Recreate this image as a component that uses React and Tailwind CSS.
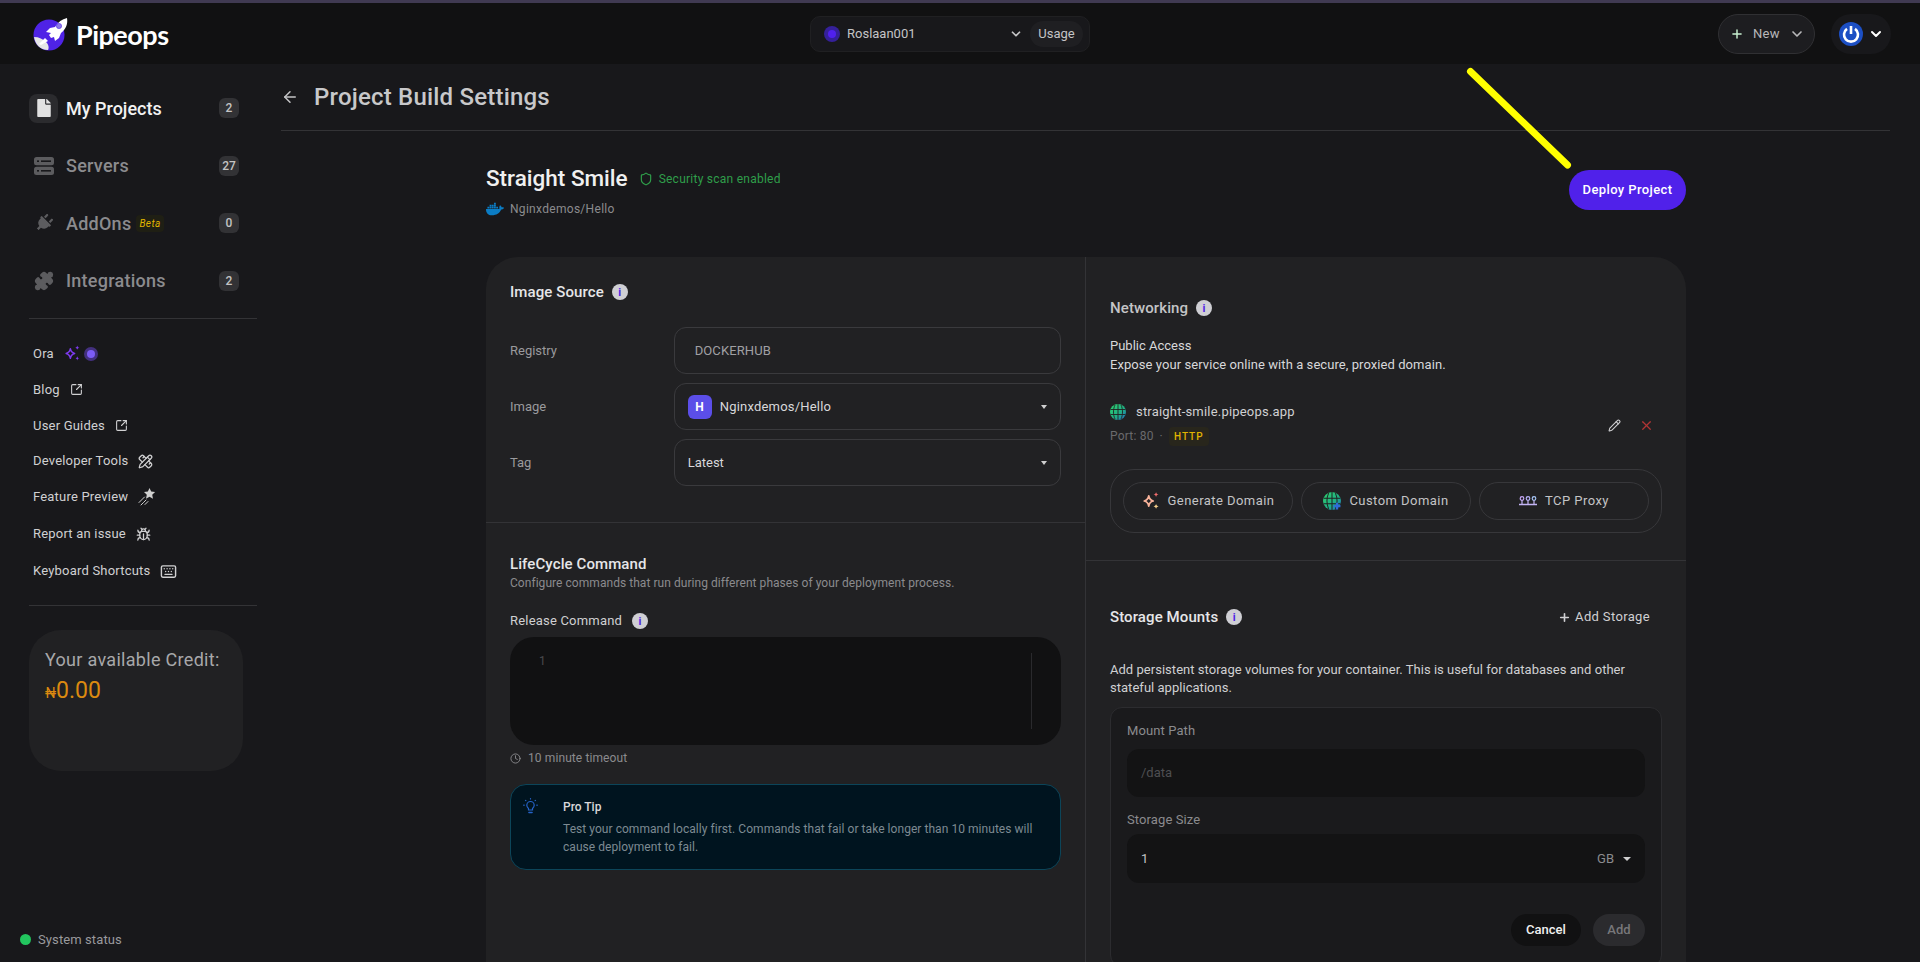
import React from "react";
import { ArrowLeft, ChevronDown, Plus, SquareArrowOutUpRight, PencilRuler, Bug, Keyboard, Shield, Pencil, X, Clock, Puzzle } from "lucide-react";
import { FaFile, FaPlug, FaDocker } from "react-icons/fa";

const Logo = () => (
  <svg width="36" height="34" viewBox="0 0 36 34" className="shrink-0">
    <circle cx="16" cy="18" r="15.5" fill="#4f23e6" />
    <path d="M1 20c5 0 9 2 12 5s3 6 2 8C7 33 2 27 1 20z" fill="#e6e6e6" />
    <path d="M34 1c1 6-1 11-6 15l-2 5-4 3-1-4-3 1-2-3 2-2-5-1 4-4 5-1c3-5 7-8 12-9z" fill="#fff" />
    <path d="M12 21l3 3-7 4-2-1z" fill="#fff" />
    <circle cx="26" cy="9" r="2.6" fill="#8d7ae6" stroke="#4f23e6" strokeWidth="0.6" />
  </svg>
);

const ServerIcon = () => (
  <svg width="20" height="18" viewBox="0 0 20 18">
    <rect width="20" height="8.2" y="0" rx="2.5" fill="#5c5c5f" />
    <rect width="20" height="8.2" y="9.8" rx="2.5" fill="#5c5c5f" />
    <rect x="3" y="3.4" width="2" height="1.6" fill="#18181b" />
    <rect x="7" y="3.4" width="10" height="1.6" fill="#18181b" />
    <rect x="3" y="13" width="2" height="1.6" fill="#18181b" />
    <rect x="7" y="13" width="10" height="1.6" fill="#18181b" />
  </svg>
);

const OraSpark = () => (
  <svg width="17" height="17" viewBox="0 0 16 16" fill="none">
    <path d="M6 3.5c.4 2.6 1.500 3.800 4 4.500-2.500.7-3.600 1.900-4 4.500C5.600 9.900 4.500 8.700 2 8c2.500-.7 3.600-1.900 4-4.500z" stroke="#7c3aed" strokeWidth="1.4" strokeLinejoin="round" />
    <path d="M12.500 0.500c.2 1.200.8 1.800 2 2-1.200.2-1.800.8-2 2-.2-1.200-.8-1.800-2-2 1.200-.2 1.800-.8 2-2zM12.500 10.500c.2 1.200.8 1.800 2 2-1.200.2-1.800.8-2 2-.2-1.200-.8-1.800-2-2 1.200-.2 1.800-.8 2-2z" fill="#7c3aed" />
  </svg>
);

const StarTrail = () => (
  <svg width="18" height="18" viewBox="0 0 18 18" fill="none">
    <path d="M11.500 0l1.700 3.600 3.900.5-2.900 2.700.8 3.900-3.500-1.900-3.500 1.900.8-3.900L6 4.100l3.900-.5z" fill="#cfcfcf" />
    <path d="M6.500 9L1 14.500M8 12l-2.500 2.500M3 17l2-2M7 16.500L10 13.500" stroke="#cfcfcf" strokeWidth="1" strokeLinecap="round" />
  </svg>
);

const PowerAvatar = () => (
  <svg width="24" height="24" viewBox="0 0 24 24">
    <circle cx="12" cy="12" r="12" fill="#1c4fc4" />
    <path d="M8 6.900a7 7 0 1 0 8 0" fill="none" stroke="#fff" strokeWidth="2.600" />
    <path d="M12 4v8" stroke="#fff" strokeWidth="2.600" />
  </svg>
);

const Bulb = () => (
  <svg width="15" height="17" viewBox="0 0 15 17" fill="none" stroke="#2563c9" strokeWidth="1.200" strokeLinecap="round" className="shrink-0">
    <path d="M5.500 11.500C4.500 10.500 3.800 9.700 3.800 8.200a3.700 3.700 0 0 1 7.400 0c0 1.500-.7 2.300-1.700 3.300v1.500h-4z" />
    <path d="M6 15.500h3" strokeWidth="1.600" />
    <path d="M7.500 1.500v.5M2.500 3.300l.4.4M12.500 3.300l-.4.4M.7 8.200h.5M13.800 8.200h.5" />
  </svg>
);

const Globe = ({ plus = false, id = "g1", size = 16 }) => (
  <svg width={size} height={size} viewBox="0 0 16 16">
    <defs>
      <linearGradient id={id} x1="0" y1="0" x2="1" y2="1">
        <stop offset="0" stopColor="#2fd36b" />
        <stop offset="0.6" stopColor="#1fae86" />
        <stop offset="1" stopColor="#2563c9" />
      </linearGradient>
    </defs>
    <circle cx="8" cy="8" r="8" fill={`url(#${id})`} />
    <path d="M0.500 5.500h15M0.500 10.500h15M8 0v16M5 1c-2 4-2 10 0 14M11 1c2 4 2 10 0 14" stroke="#212123" strokeWidth="0.9" fill="none" />
    {plus && <path d="M12.500 9.500v6M9.500 12.500h6" stroke="#2f6bd8" strokeWidth="2" />}
  </svg>
);

const GenSpark = () => (
  <svg width="18" height="18" viewBox="0 0 16 16" fill="none">
    <path d="M6 3.500c.4 2.600 1.500 3.800 4 4.500-2.500.7-3.600 1.900-4 4.500C5.600 9.900 4.500 8.700 2 8c2.500-.7 3.600-1.900 4-4.500z" stroke="#f7b29a" strokeWidth="1.600" strokeLinejoin="round" />
    <path d="M12.500 0c.2 1.400.9 2.100 2.300 2.300-1.400.2-2.100.9-2.300 2.300-.2-1.400-.9-2.100-2.300-2.300C11.600 2.100 12.300 1.400 12.500 0z" fill="#f26d6d" />
    <path d="M12.500 10.500c.2 1.400.9 2.100 2.300 2.300-1.400.2-2.100.9-2.300 2.300-.2-1.400-.9-2.100-2.300-2.300 1.400-.2 2.100-.9 2.300-2.300z" fill="#f7d08a" />
  </svg>
);

const TcpIcon = () => (
  <svg width="18" height="10" viewBox="0 0 18 10" fill="none">
    <circle cx="3" cy="2.500" r="1.800" stroke="#c4a5f5" strokeWidth="1.200" />
    <circle cx="9" cy="2.500" r="1.800" stroke="#b4b0f5" strokeWidth="1.200" />
    <circle cx="15" cy="2.500" r="1.800" stroke="#a5c4f5" strokeWidth="1.200" />
    <path d="M3 4.300V8M9 4.300V8M15 4.300V8" stroke="#c4b5f5" strokeWidth="1.200" />
    <path d="M0 8.500h18" stroke="#c4b5f5" strokeWidth="1.500" />
  </svg>
);

const InfoDot = () => (
  <span className="w-4 h-4 rounded-full bg-[#cfcfd4] flex items-center justify-center text-[#4f23e6] text-[11px] font-bold leading-none">i</span>
);

const Badge = ({ children }) => (
  <span className="w-5 h-5 rounded-[6px] bg-[#323235] text-[#c4c4c4] text-[12px] font-medium flex items-center justify-center">{children}</span>
);

const NavRow = ({ icon, label, badge, active, extra }) => (
  <div className="h-[57.5px] w-[210px] flex items-center">
    <div className={`w-[29px] h-[29px] rounded-lg flex items-center justify-center ${active ? "bg-[#2b2b2e]" : ""}`}>{icon}</div>
    <span className={`ml-2 text-[18px] font-medium ${active ? "text-[#f2f2f2]" : "text-[#8b8b8e] tracking-[0.25px]"}`}>{label}</span>
    {extra}
    <span className="ml-auto"><Badge>{badge}</Badge></span>
  </div>
);

const SideLink = ({ label, children, h }) => (
  <div className={`${h} flex items-center pl-1 gap-[10px] text-[13px] tracking-[0.2px] text-[#d0d0d2]`}>
    <span>{label}</span>
    {children}
  </div>
);

const FormRow = ({ label, children }) => (
  <div className="flex items-center">
    <span className="w-[164px] text-[13px] text-[#9a9a9d]">{label}</span>
    {children}
  </div>
);

const Caret = () => <span className="ml-auto w-0 h-0 border-l-[3.500px] border-r-[3.500px] border-t-[4px] border-l-transparent border-r-transparent border-t-[#d0d0d0]" />;

const DomainBtn = ({ icon, label }) => (
  <div className="flex-1 h-[38px] rounded-full border border-[#37373a] flex items-center justify-center gap-[8px] text-[13px] tracking-[0.45px] text-[#c4c4c6]">
    {icon}
    <span>{label}</span>
  </div>
);

export default function App() {
  return (
    <div className="relative w-full h-[962px] overflow-hidden bg-[#18181b] flex flex-col font-['Roboto',sans-serif]">
      <div className="h-[3px] bg-[#403a52] shrink-0" />
      <header className="h-[61px] bg-[#111112] shrink-0 flex items-center pl-[33px] pr-[29px] relative">
        <div className="flex items-center gap-[7px] w-[300px]">
          <Logo />
          <span className="font-['Lato',sans-serif] text-[27px] font-bold text-white tracking-[-0.5px] pt-[3px]">Pipeops</span>
        </div>
        <div className="ml-[477px] w-[280px] h-[36px] rounded-[10px] bg-[#18181b] border border-[#202022] flex items-center pl-[13px] pr-[6px]">
          <span className="w-4 h-4 rounded-full bg-[#35209a] flex items-center justify-center"><span className="w-2 h-2 rounded-full bg-[#5020ee]" /></span>
          <span className="ml-[7px] text-[13px] text-[#c4c4c6]">Roslaan001</span>
          <ChevronDown size={14} strokeWidth={3} className="ml-auto text-[#c4c4c6]" />
          <span className="ml-[7px] h-[26px] w-[53px] rounded-full bg-[#1f1f22] flex items-center justify-center text-[13px] text-[#c4c4c6]">Usage</span>
        </div>
        <div className="ml-auto flex items-center gap-4">
          <div className="w-[97px] h-[40px] rounded-full bg-[#1d1d20] border border-[#303033] flex items-center pl-[11px]">
            <Plus size={14} strokeWidth={2.5} className="text-[#c8f0d0]" />
            <span className="ml-[9px] text-[13px] tracking-[0.3px] text-[#b8b8ba]">New</span>
            <ChevronDown size={16} strokeWidth={2.5} className="text-[#b8b8ba] ml-[9px]" />
          </div>
          <div className="w-[60px] h-[40px] rounded-full bg-[#18181b] flex items-center pl-[8px] gap-[5px]">
            <PowerAvatar />
            <ChevronDown size={16} strokeWidth={3} className="text-white" />
          </div>
        </div>
      </header>
      <div className="flex-1 flex min-h-0">
        <aside className="w-[281px] shrink-0 pl-[29px] pr-[24px] pt-[15.500px] flex flex-col relative">
          <NavRow active label="My Projects" badge="2" icon={<FaFile size={18} className="text-[#e2e2e2]" />} />
          <NavRow label="Servers" badge="27" icon={<ServerIcon />} />
          <NavRow label="AddOns" badge="0" icon={<FaPlug size={18} className="text-[#5c5c5f] rotate-45" />} extra={<span className="ml-[5px] px-[3px] py-[1px] rounded bg-[#1f1f14] text-[10px] italic tracking-[0.4px] text-[#e0b400]">Beta</span>} />
          <NavRow label="Integrations" badge="2" icon={<Puzzle size={20} className="text-[#5c5c5f]" fill="#5c5c5f" />} />
          <div className="h-px bg-[#333336] mt-[8px] w-[228px] mb-[17px]" />
          <SideLink h="h-[36px]" label="Ora"><span className="flex items-center gap-[3px]"><OraSpark /><span className="w-[14px] h-[14px] rounded-full bg-[#43307f] flex items-center justify-center"><span className="w-2 h-2 rounded-full bg-[#7c5cf6]" /></span></span></SideLink>
          <SideLink h="h-[36px]" label="Blog"><SquareArrowOutUpRight size={13} /></SideLink>
          <SideLink h="h-[36px]" label="User Guides"><SquareArrowOutUpRight size={13} /></SideLink>
          <SideLink h="h-[35px]" label="Developer Tools"><PencilRuler size={15} /></SideLink>
          <SideLink h="h-[37px]" label="Feature Preview"><StarTrail /></SideLink>
          <SideLink h="h-[37px]" label="Report an issue"><Bug size={15} /></SideLink>
          <SideLink h="h-[37px]" label="Keyboard Shortcuts"><Keyboard size={17} /></SideLink>
          <div className="h-px bg-[#333336] mt-[15px] w-[228px]" />
          <div className="mt-[24px] w-[214px] h-[141px] rounded-[32px] bg-[#212123] pl-4 pt-[16px]">
            <div className="text-[18px] tracking-[0.3px] text-[#a8a8aa] leading-[28px]">Your available Credit:</div>
            <div className="text-[23px] leading-[32px] mt-[1px] text-[#dc8a10]"><span className="text-[14px]">₦</span>0.00</div>
          </div>
          <div className="absolute left-[20px] top-[866px] flex items-center gap-[7px] text-[13px] tracking-[0.1px] text-[#9a9a9d]">
            <span className="w-[11px] h-[11px] rounded-full bg-[#22c55e]" />
            System status
          </div>
        </aside>
        <main className="flex-1 min-w-0 pr-[30px]">
          <div className="h-[67px] border-b border-[#333336] flex items-center gap-[15px]">
            <ArrowLeft size={18} className="text-[#c4c4c6]" />
            <h1 className="text-[24px] font-medium tracking-[0.2px] text-[#c8c8ca]">Project Build Settings</h1>
          </div>
          <div className="ml-[205px] w-[1200px]">
            <div className="h-[126px] flex justify-between">
              <div className="pt-[31px]">
                <div className="flex items-center gap-[11px]">
                  <span className="text-[22.500px] font-medium text-[#f0f0f0]">Straight Smile</span>
                  <span className="flex items-center gap-[6px] text-[12px] tracking-[0.25px] text-[#2f9e4a]"><Shield size={14} />Security scan enabled</span>
                </div>
                <div className="flex items-center gap-[6px] mt-[4px] text-[12px] tracking-[0.3px] text-[#8b8b8e]">
                  <FaDocker size={18} className="text-[#0b7cc4]" />
                  Nginxdemos/Hello
                </div>
              </div>
              <button className="mt-[39px] h-[40px] w-[117px] rounded-full bg-[#5021ea] text-white text-[13px] font-medium tracking-[0.4px]">Deploy Project</button>
            </div>
            <div className="rounded-t-[32px] bg-[#212123] flex h-[800px]">
              <section className="w-[600px] border-r border-[#333336]">
                <div className="h-[266px] border-b border-[#333336] px-6 pt-[25px]">
                  <div className="flex items-center gap-2 h-5 text-[15px] font-medium tracking-[0.1px] text-[#e6e6e8]">Image Source <InfoDot /></div>
                  <div className="mt-[25px] flex flex-col gap-[9px]">
                    <FormRow label="Registry"><div className="w-[388px] h-[47px] rounded-xl border border-[#3a3a3d] flex items-center pl-5 text-[13px] tracking-[0.1px] text-[#a0a0a3]">DOCKERHUB</div></FormRow>
                    <FormRow label="Image"><div className="w-[388px] h-[47px] rounded-xl border border-[#3a3a3d] flex items-center pl-[13px] pr-[13px] text-[13px] tracking-[0.2px] text-[#d8d8da]"><span className="w-6 h-6 rounded-md bg-[#5b4ee8] text-white text-[12px] font-bold flex items-center justify-center mr-[8px]">H</span>Nginxdemos/Hello<Caret /></div></FormRow>
                    <FormRow label="Tag"><div className="w-[388px] h-[47px] rounded-xl border border-[#3a3a3d] flex items-center pl-[13px] pr-[13px] text-[13px] text-[#d8d8da]">Latest<Caret /></div></FormRow>
                  </div>
                </div>
                <div className="px-6 pt-[31px]">
                  <div className="text-[15px] font-medium tracking-[0.1px] leading-5 text-[#e6e6e8]">LifeCycle Command</div>
                  <div className="text-[12px] tracking-[0.05px] leading-4 mt-[1px] text-[#8b8b8e]">Configure commands that run during different phases of your deployment process.</div>
                  <div className="flex items-center gap-[10px] mt-[20px] h-5 text-[13px] tracking-[0.2px] text-[#d0d0d2]">Release Command <InfoDot /></div>
                  <div className="mt-[6px] h-[108px] w-[551px] rounded-[24px] bg-[#111112] relative pl-[29px] pt-[15px] text-[12px] text-[#4a4a4d]">
                    1
                    <span className="absolute right-[29px] top-[16px] bottom-[16px] w-px bg-[#2a2a2d]" />
                  </div>
                  <div className="flex items-center gap-[7px] mt-[3px] h-5 text-[12px] tracking-[0.1px] text-[#8b8b8e]"><Clock size={11} />10 minute timeout</div>
                  <div className="mt-[16px] h-[86px] w-[551px] rounded-2xl bg-[#00141f] border border-[#0c4559] flex pl-[12px] pt-[12px]">
                    <Bulb />
                    <div className="ml-[25px] pt-[1px]">
                      <div className="text-[12px] font-medium text-[#d8d8da] leading-[18px]">Pro Tip</div>
                      <div className="text-[12px] tracking-[0.05px] leading-[18px] mt-[4px] w-[490px] text-[#7d8a92]">Test your command locally first. Commands that fail or take longer than 10 minutes will cause deployment to fail.</div>
                    </div>
                  </div>
                </div>
              </section>
              <section className="flex-1 min-w-0">
                <div className="h-[304px] border-b border-[#333336] px-6 pt-[41px]">
                  <div className="flex items-center gap-2 h-5 text-[15px] font-medium tracking-[0.1px] text-[#c4c4c6]">Networking <InfoDot /></div>
                  <div className="mt-[18px] text-[13px] leading-[19px] text-[#d8d8da]">Public Access</div>
                  <div className="text-[13px] leading-5 tracking-[0.07px] text-[#d8d8da]">Expose your service online with a secure, proxied domain.</div>
                  <div className="mt-[25px] flex items-center justify-between h-[50px]">
                    <div className="-mt-[2px]">
                      <div className="flex items-center gap-[10px] text-[13px] tracking-[0.2px] text-[#d0d0d2]"><Globe id="g1" />straight-smile.pipeops.app</div>
                      <div className="flex items-center gap-[6px] mt-[5px] text-[12px] tracking-[0.2px] text-[#6a6a6d]">Port: 80 <span>·</span><span className="px-[5px] py-[2px] rounded bg-[#28261c] text-[10px] tracking-[1px] font-medium text-[#e0b400]">HTTP</span></div>
                    </div>
                    <div className="flex items-center gap-[18px] pr-[8px]">
                      <Pencil size={13} className="text-[#d0d0d2]" />
                      <X size={15} className="text-[#b03434]" />
                    </div>
                  </div>
                  <div className="mt-[19px] h-[64px] rounded-[24px] border border-[#37373a] flex items-center gap-2 px-[12px]">
                    <DomainBtn icon={<GenSpark />} label="Generate Domain" />
                    <DomainBtn icon={<Globe plus id="g2" size={18} />} label="Custom Domain" />
                    <DomainBtn icon={<TcpIcon />} label="TCP Proxy" />
                  </div>
                </div>
                <div className="px-6 pt-[46px]">
                  <div className="flex items-center justify-between h-5">
                    <div className="flex items-center gap-2 text-[15px] font-medium tracking-[0.1px] text-[#e6e6e8]">Storage Mounts <InfoDot /></div>
                    <div className="flex items-center gap-[4px] pr-[12px] text-[13px] tracking-[0.35px] text-[#d0d0d2]"><Plus size={13} strokeWidth={3} />Add Storage</div>
                  </div>
                  <p className="mt-[34px] text-[13px] tracking-[0.03px] leading-[17.500px] text-[#d0d0d2] w-[540px]">Add persistent storage volumes for your container. This is useful for databases and other stateful applications.</p>
                  <div className="mt-[11px] rounded-xl border border-[#2c2c2f] bg-[#1a1a1c] px-4 pt-[15px] h-[260px]">
                    <div className="text-[13px] tracking-[0.1px] leading-4 text-[#8b8b8e]">Mount Path</div>
                    <div className="mt-[10px] h-[48px] rounded-xl bg-[#131314] flex items-center pl-[14px] text-[13px] text-[#4e4e51]">/data</div>
                    <div className="mt-[15px] text-[13px] tracking-[0.1px] leading-4 text-[#8b8b8e]">Storage Size</div>
                    <div className="mt-[6px] h-[49px] rounded-xl bg-[#131314] flex items-center px-[14px] text-[13px] text-[#c4c4c6]">1<span className="ml-auto mr-[9px] text-[#8b8b8e]">GB</span><span className="w-0 h-0 border-l-[4px] border-r-[4px] border-t-[4px] border-l-transparent border-r-transparent border-t-[#d0d0d0]" /></div>
                    <div className="mt-[31px] flex justify-end gap-[12px]">
                      <button className="h-[32px] w-[70px] rounded-full bg-[#111112] text-[13px] font-medium text-[#f0f0f0]">Cancel</button>
                      <button className="h-[32px] w-[52px] rounded-full bg-[#2b2b2e] text-[13px] font-medium text-[#77777a]">Add</button>
                    </div>
                  </div>
                </div>
              </section>
            </div>
          </div>
        </main>
      </div>
      <svg className="absolute left-[1460px] top-[60px] pointer-events-none" width="120" height="115" viewBox="0 0 120 115">
        <line x1="10.500" y1="11.500" x2="107.500" y2="105" stroke="#ffff00" strokeWidth="7" strokeLinecap="round" />
      </svg>
    </div>
  );
}
